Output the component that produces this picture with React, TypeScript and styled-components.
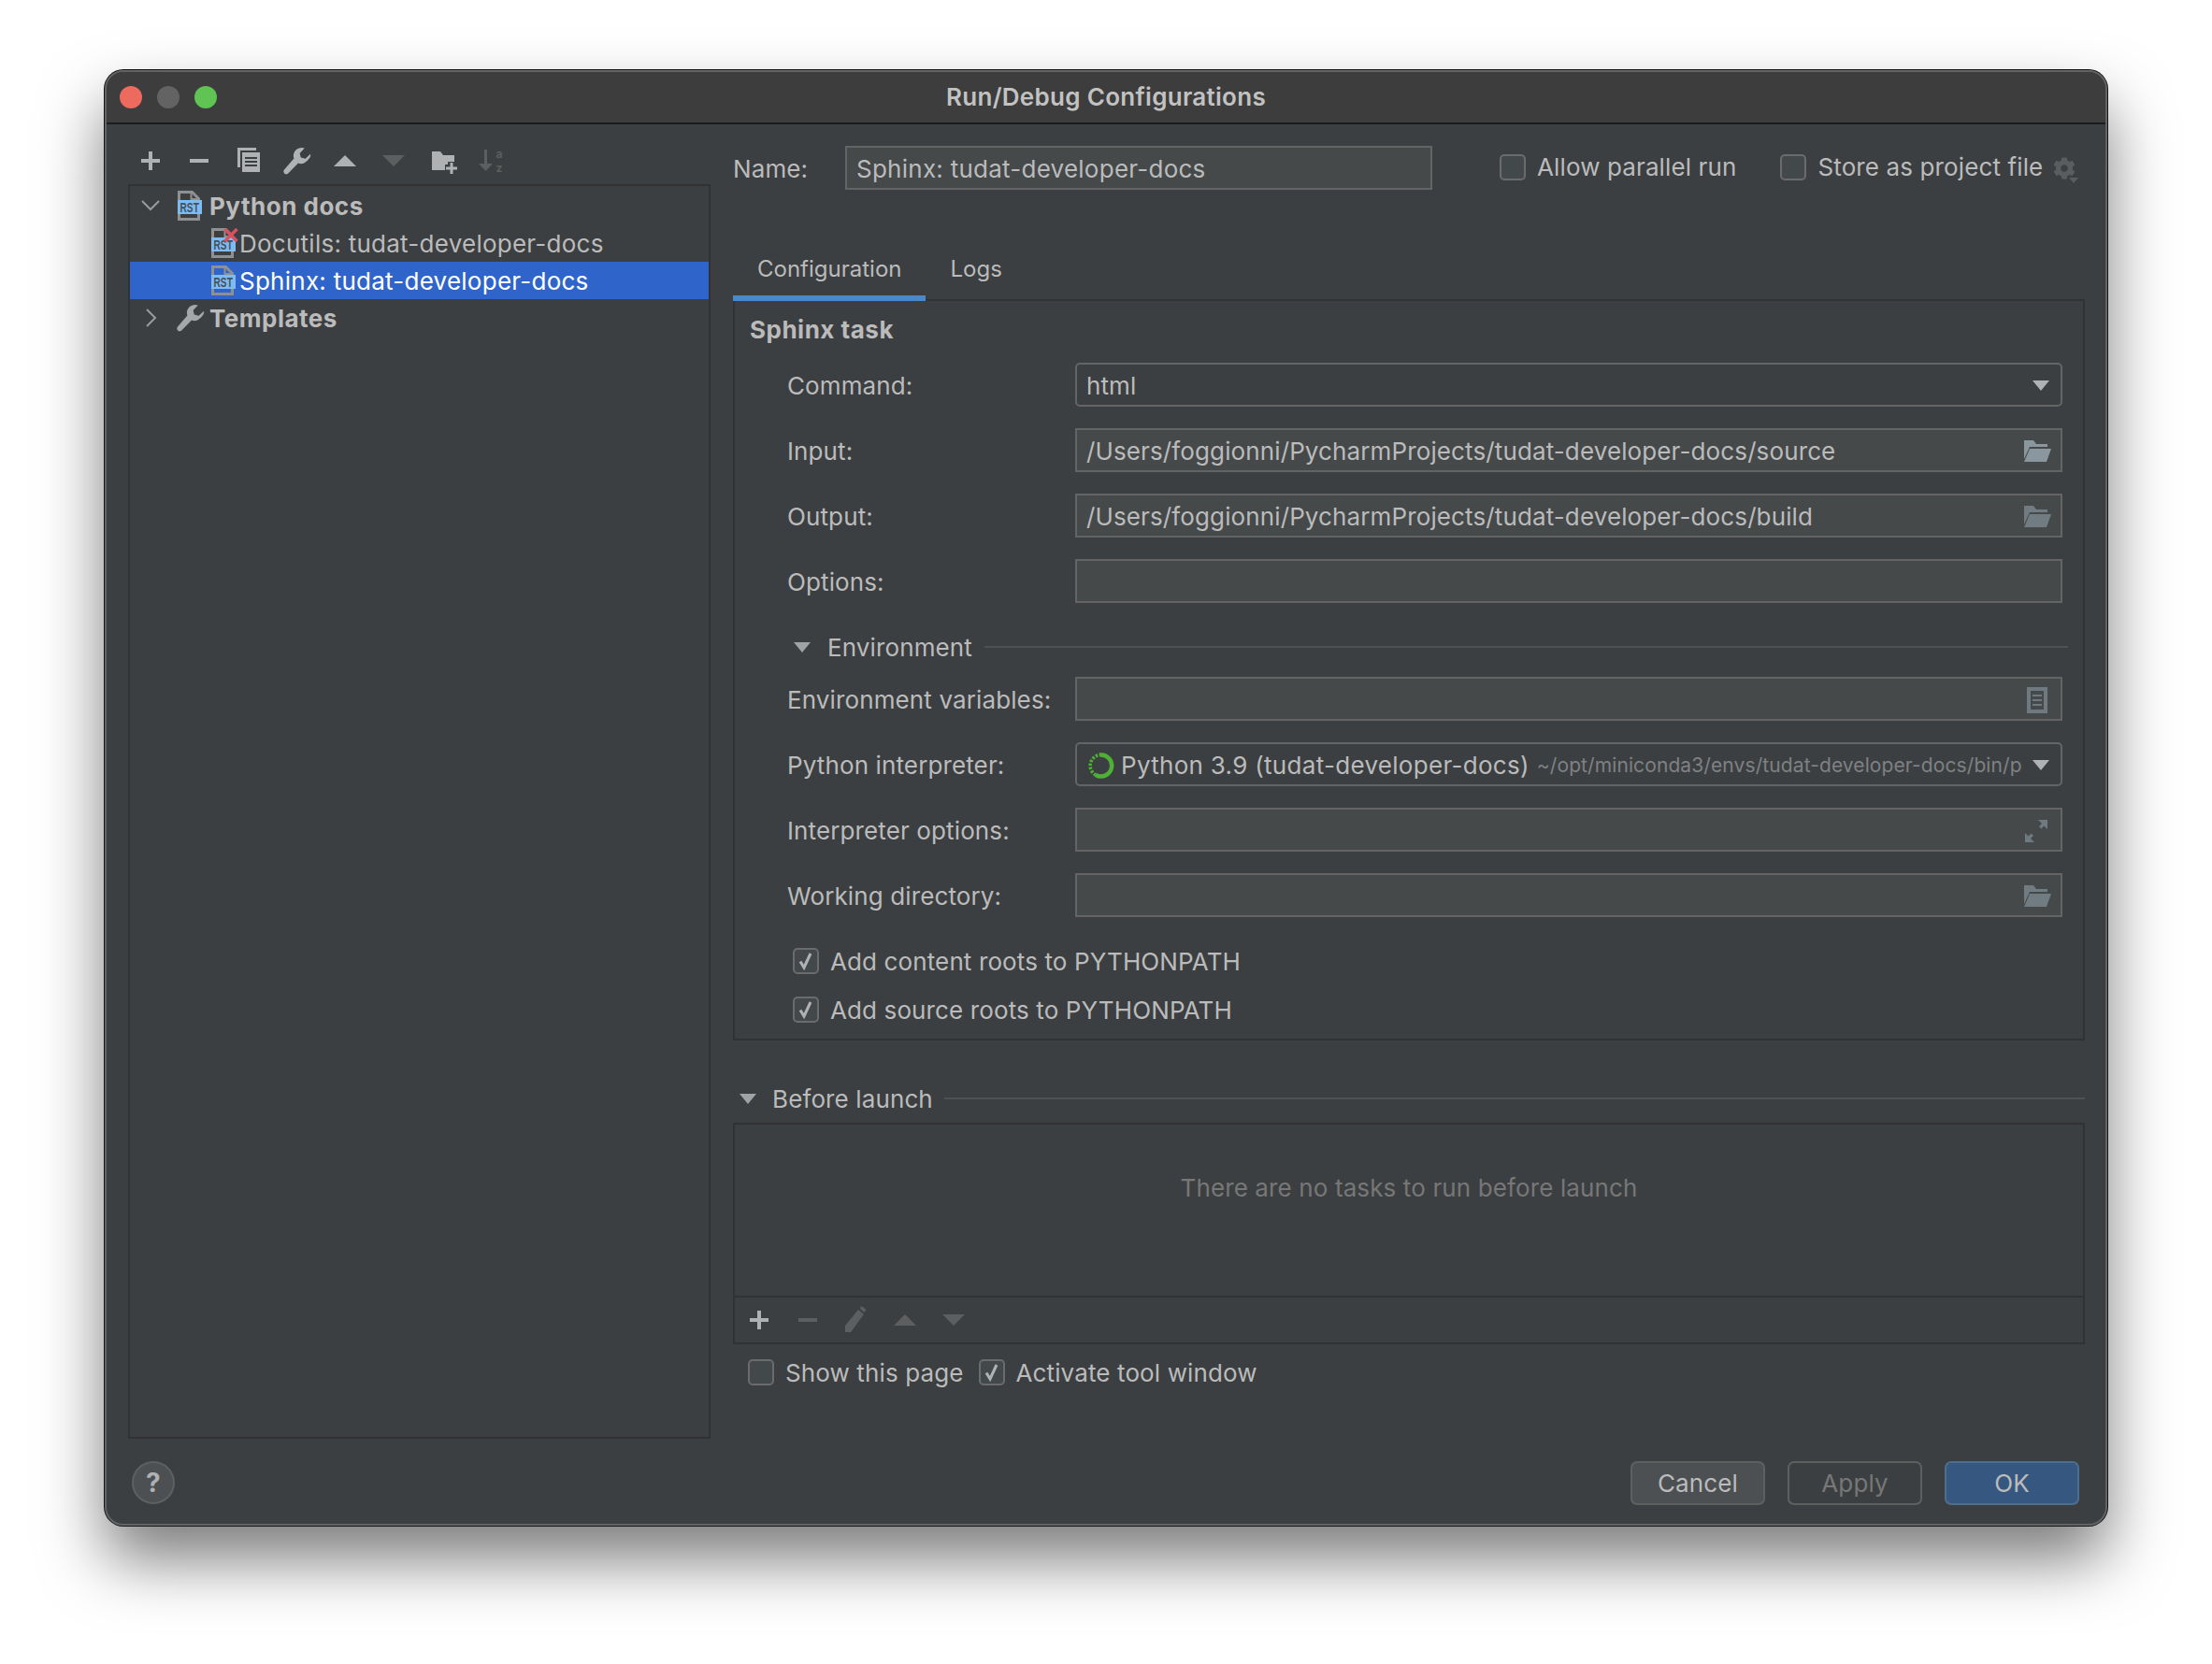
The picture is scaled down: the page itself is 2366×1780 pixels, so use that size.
import React from "react";
import styled, { createGlobalStyle } from "styled-components";
import { FaCog } from "react-icons/fa";

const ACTIVE = "#afb1b3";
const DISABLED = "#5c5e60";
const PANEL = "#3c3f41";

const GlobalStyle = createGlobalStyle`
  html, body {
    margin: 0;
    background: #fff;
  }
  * {
    box-sizing: border-box;
  }
`;

const Page = styled.div`
  width: 2366px;
  height: 1780px;
  padding: 75px 0 0 112px;
  overflow: hidden;
  background: #fff;
  font-family: Inter, "Noto Sans", sans-serif;
  font-size: 26px;
  letter-spacing: 0.12px;
  color: #bbb;
`;

const Window = styled.div`
  width: 2142px;
  height: 1557px;
  display: flex;
  flex-direction: column;
  background: ${PANEL};
  border: 2px solid #626466;
  border-radius: 20px;
  box-shadow: 0 0 0 1px #151515, 0 36px 68px rgba(0, 0, 0, 0.52);
`;

const TitleBar = styled.div`
  flex: none;
  height: 56px;
  display: grid;
  grid-template-columns: 1fr auto 1fr;
  align-items: center;
  padding: 0 14px;
  background: #3d3d3d;
  border-bottom: 2px solid #1c1c1c;
  border-radius: 18px 18px 0 0;
`;

const Lights = styled.div`
  display: flex;
  gap: 16px;
`;

const Light = styled.span<{ $color: string }>`
  width: 24px;
  height: 24px;
  border-radius: 50%;
  background: ${(p) => p.$color};
`;

const Title = styled.div`
  font-size: 26px;
  font-weight: 600;
  color: #c2c2c2;
  letter-spacing: 0.3px;
  padding-bottom: 1px;
`;

const Main = styled.div`
  flex: none;
  height: 1406px;
  display: flex;
  padding-left: 23px;
  gap: 24px;
`;

const Sidebar = styled.div`
  flex: none;
  width: 623px;
  display: flex;
  flex-direction: column;
`;

const Toolbar = styled.div<{ $left: number }>`
  display: flex;
  align-items: center;
  gap: 20px;
  padding-left: ${(p) => p.$left}px;
`;

const SideTools = styled(Toolbar)`
  margin-top: 23px;
  margin-bottom: 9px;
  height: 32px;
`;

const Tree = styled.div`
  flex: 1;
  padding-top: 1px;
  border: 2px solid #323232;
`;

const TreeRow = styled.div<{ $indent: number; $selected?: boolean; $gap: number }>`
  height: 40px;
  display: flex;
  align-items: center;
  gap: ${(p) => p.$gap}px;
  padding-left: ${(p) => p.$indent}px;
  background: ${(p) => (p.$selected ? "#2f65ca" : "transparent")};
  color: ${(p) => (p.$selected ? "#fff" : "#bbb")};
`;

const TreeLabel = styled.span<{ $bold?: boolean }>`
  font-weight: ${(p) => (p.$bold ? 700 : 400)};
  letter-spacing: ${(p) => (p.$bold ? "0.5px" : "0.25px")};
  white-space: nowrap;
  margin-left: ${(p) => (p.$bold ? "-5px" : "0")};
`;

const Right = styled.div`
  flex: none;
  width: 1446px;
  display: flex;
  flex-direction: column;
`;

const NameRow = styled.div`
  margin-top: 23px;
  height: 47px;
  display: flex;
  align-items: center;
`;

const NameLabel = styled.span`
  width: 120px;
  padding-top: 2px;
`;

const TextBox = styled.div`
  height: 47px;
  display: flex;
  align-items: center;
  justify-content: space-between;
  padding: 2px 10px 0;
  background: #45494a;
  border: 2px solid #646464;
  white-space: nowrap;
`;

const NameBox = styled(TextBox)`
  width: 628px;
  margin-right: 72px;
  letter-spacing: 0.25px;
`;

const CheckLine = styled.label<{ $gap?: number; $after?: number }>`
  display: flex;
  align-items: center;
  gap: ${(p) => p.$gap ?? 12}px;
  margin-right: ${(p) => p.$after ?? 0}px;
  white-space: nowrap;
`;

const HeadCheck = styled(CheckLine)`
  position: relative;
  top: -1px;
`;

const Box = styled.span`
  flex: none;
  width: 28px;
  height: 28px;
  display: flex;
  align-items: center;
  justify-content: center;
  background: #43494a;
  border: 2px solid #6b6b6b;
  border-radius: 5px;
`;

const GearWrap = styled.span`
  position: relative;
  display: flex;
  margin-left: 11px;
  color: #5a5c5e;
`;

const GearCaret = styled.span`
  position: absolute;
  right: -3px;
  bottom: -4px;
  border-left: 5px solid transparent;
  border-right: 5px solid transparent;
  border-top: 6px solid #5a5c5e;
`;

const TabBar = styled.div`
  margin-top: 59px;
  height: 60px;
  display: flex;
`;

const Tab = styled.div<{ $active?: boolean }>`
  position: relative;
  z-index: 1;
  display: flex;
  align-items: center;
  padding: 0 26px 4px;
  font-size: 24px;
  letter-spacing: 0;
  border-bottom: 6px solid ${(p) => (p.$active ? "#4a88c7" : "transparent")};
`;

const TabPanel = styled.div`
  margin-top: -2px;
  height: 793px;
  padding: 14px 22px 0 16px;
  border: 2px solid #323232;
`;

const Heading = styled.div`
  height: 34px;
  line-height: 34px;
  margin-bottom: 18px;
  font-weight: 700;
  letter-spacing: 0.5px;
`;

const FormRow = styled.div`
  height: 47px;
  margin-bottom: 23px;
  display: flex;
  align-items: center;
  padding-left: 40px;
`;

const FormLabel = styled.span`
  flex: none;
  width: 308px;
  padding-top: 2px;
  white-space: nowrap;
`;

const Field = styled(TextBox)`
  flex: 1;
  min-width: 0;
`;

const Combo = styled(Field)`
  background: ${PANEL};
  border-radius: 5px;
`;

const ComboMain = styled.span`
  display: flex;
  align-items: center;
  gap: 7px;
  padding-left: 2px;
  letter-spacing: 0.3px;
  white-space: nowrap;
`;

const ComboHint = styled.span`
  margin-left: 1px;
  font-size: 21px;
  letter-spacing: 0.1px;
  color: #7f8183;
`;

const Section = styled.div<{ $indent: number }>`
  height: 34px;
  display: flex;
  align-items: center;
  gap: 18px;
  padding-left: ${(p) => p.$indent}px;
`;

const EnvSection = styled(Section)`
  margin-top: 30px;
  margin-bottom: 15px;
  margin-right: -6px;
`;

const LaunchSection = styled(Section)`
  margin-top: 45px;
  margin-bottom: 9px;
  gap: 17px;
`;

const SectionLine = styled.span`
  flex: 1;
  height: 2px;
  margin-left: -5px;
  background: #505152;
`;

const CheckStack = styled.div`
  display: flex;
  flex-direction: column;
  gap: 18px;
  margin-top: 30px;
  padding-left: 46px;
`;

const Checked = styled(CheckLine)`
  height: 34px;
`;

const LaunchBox = styled.div`
  height: 237px;
  display: flex;
  flex-direction: column;
  border: 2px solid #323232;
`;

const EmptyNote = styled.div`
  height: 183px;
  padding-top: 51px;
  line-height: 34px;
  text-align: center;
  color: #777;
`;

const LaunchTools = styled(Toolbar)`
  flex: 1;
  border-top: 2px solid #323232;
`;

const PageOptions = styled.div`
  margin-top: 13px;
  height: 34px;
  display: flex;
  align-items: center;
  padding-left: 16px;
`;

const Footer = styled.div`
  flex: 1;
  display: flex;
  align-items: flex-start;
  justify-content: space-between;
  padding: 24px 28px 0 27px;
`;

const HelpButton = styled.div`
  width: 46px;
  height: 46px;
  display: flex;
  align-items: center;
  justify-content: center;
  border-radius: 50%;
  background: #4c5052;
  border: 2px solid #5e6060;
  font-size: 28px;
  font-weight: 700;
  color: #afb1b3;
`;

const Buttons = styled.div`
  display: flex;
  gap: 24px;
`;

const Button = styled.div<{ $kind: "plain" | "off" | "main" }>`
  width: 144px;
  height: 47px;
  display: flex;
  align-items: center;
  justify-content: center;
  border-radius: 7px;
  background: ${(p) =>
    p.$kind === "main" ? "#365880" : p.$kind === "plain" ? "#4c5052" : "transparent"};
  border: 2px solid ${(p) => (p.$kind === "main" ? "#4c708c" : "#5e6060")};
  color: ${(p) => (p.$kind === "off" ? "#777" : "#bbb")};
`;

const Svg = styled.svg<{ $inset?: number }>`
  flex: none;
  display: block;
  margin-right: ${(p) => p.$inset ?? 0}px;
`;

function Plus({ color = ACTIVE }: { color?: string }) {
  return (
    <Svg width="32" height="32" viewBox="0 0 32 32" fill={color}>
      <rect x="6" y="14" width="20" height="4" />
      <rect x="14" y="6" width="4" height="20" />
    </Svg>
  );
}

function Minus({ color = ACTIVE }: { color?: string }) {
  return (
    <Svg width="32" height="32" viewBox="0 0 32 32" fill={color}>
      <rect x="6" y="14" width="20" height="4" />
    </Svg>
  );
}

function Copy() {
  return (
    <Svg width="32" height="32" viewBox="-1 0 32 32" fill={ACTIVE}>
      <path d="M4 2h20v3H7v18H4z" />
      <rect x="9" y="7" width="19" height="21" />
      <rect x="12" y="12" width="13" height="2" fill={PANEL} />
      <rect x="12" y="16" width="13" height="2" fill={PANEL} />
      <rect x="12" y="20" width="13" height="2" fill={PANEL} />
    </Svg>
  );
}

const WRENCH =
  "M15 4.400l-2.700 2.500-2.400-.6-.6-2.300L11.900 1.300C10.200.7 8.400 1.100 7.200 2.300 6 3.500 5.600 5.300 6.200 6.800L1.100 12.600c-.6.6-.6 1.500 0 2.100.6.6 1.400.6 2 0L8.500 9.300c1.600.6 3.300.2 4.500-1 1.200-1.200 2.400-2.400 2-3.900z";

function Wrench({ color = ACTIVE }: { color?: string }) {
  return (
    <Svg width="32" height="32" viewBox="-0.5 0 16 16" fill={color}>
      <path d={WRENCH} />
    </Svg>
  );
}

function Up({ color = ACTIVE }: { color?: string }) {
  return (
    <Svg width="32" height="32" viewBox="0 0 32 32" fill={color}>
      <path d="M16 10l12 12H4z" />
    </Svg>
  );
}

function Down({ color = ACTIVE }: { color?: string }) {
  return (
    <Svg width="32" height="32" viewBox="0 0 32 32" fill={color}>
      <path d="M16 22L4 10h24z" />
    </Svg>
  );
}

function FolderAdd() {
  return (
    <Svg width="32" height="32" viewBox="-2 0 32 32" fill={ACTIVE}>
      <path d="M3 6h9l3 4h12v7h-7v3h-3v6H3z" />
      <rect x="18" y="22.500" width="12" height="3" />
      <rect x="22.500" y="18" width="3" height="12" />
    </Svg>
  );
}

function Sort() {
  return (
    <Svg width="32" height="32" viewBox="0 0 32 32" fill={DISABLED}>
      <path d="M9 4h3v15h6l-7.500 8L3 19h6z" />
      <text fontSize="12" fontWeight="700" textAnchor="middle" fontFamily="Inter, sans-serif">
        <tspan x="25" y="12.500">a</tspan>
        <tspan x="25" y="27.500">z</tspan>
      </text>
    </Svg>
  );
}

function Pencil() {
  return (
    <Svg width="32" height="32" viewBox="0 0 32 32" fill={DISABLED}>
      <path d="M4 29v-7L18 5l6 5L10 29z" />
      <path d="M19.500 3.500l2-2.500 5 4-2 3z" />
    </Svg>
  );
}

function Chevron({ open }: { open: boolean }) {
  return (
    <Svg width="32" height="32" viewBox="0 0 32 32" fill="none" stroke="#9a9b9c" strokeWidth="2">
      <path d={open ? "M7 11l9 9 9-9" : "M12 7l9 9-9 9"} />
    </Svg>
  );
}

function RstIcon({ failed }: { failed?: boolean }) {
  return (
    <Svg width="32" height="32" viewBox="-2.500 0 32 32">
      <path d="M2 1.500h14l7 7v22H2z" fill="none" stroke="#8f9091" strokeWidth="3" />
      <path d="M15 1v8h8" fill="none" stroke="#8f9091" strokeWidth="2" />
      <rect x="0.500" y="10" width="26" height="15" fill="#7dbcf2" />
      <text
        transform="translate(3 22.500) scale(0.72 1)"
        fontSize="14"
        fontWeight="700"
        fill="#47505a"
        fontFamily="'Liberation Sans', sans-serif"
      >
        RST
      </text>
      {failed && <path d="M15 1l13 13M28 1L15 14" stroke="#d9505f" strokeWidth="3.500" fill="none" />}
    </Svg>
  );
}

function Folder({ dim }: { dim?: boolean }) {
  const back = dim ? "#717c82" : "#8b979e";
  return (
    <Svg width="30" height="23" viewBox="0 0 30 23">
      <path d="M1 0h10l3 4h12v3H7L1 20z" fill={back} />
      <path d="M7 9h23l-5 14H1z" fill={back} />
    </Svg>
  );
}

function Caret({ inset = 2 }: { inset?: number }) {
  return (
    <Svg $inset={inset} width="18" height="11" viewBox="0 0 18 11" fill={ACTIVE}>
      <path d="M0 0h18L9 11z" />
    </Svg>
  );
}

function ListIcon() {
  return (
    <Svg $inset={4} width="22" height="28" viewBox="0 0 22 28" fill="#6e7a80">
      <path d="M0 0h22v28H0zM4 4v20h14V4z" fillRule="evenodd" />
      <rect x="6" y="8" width="10" height="2" />
      <rect x="6" y="13" width="10" height="2" />
      <rect x="6" y="18" width="10" height="2" />
    </Svg>
  );
}

function Expand() {
  return (
    <Svg $inset={4} width="24" height="24" viewBox="0 0 24 24" fill="#6e7a80">
      <path d="M14 0h10v10l-3.600-3.600-3 3L15 7l3-3z" />
      <path d="M10 24H0V14l3.600 3.600 3-3L9 17l-3 3z" />
    </Svg>
  );
}

function CondaRing() {
  return (
    <Svg width="28" height="28" viewBox="0 0 28 28" fill="none" stroke="#4fb036">
      <path d="M12 2.600A11.500 11.500 0 1 1 8 24" strokeWidth="4.500" />
      <path d="M8 24A11.500 11.500 0 0 1 12 2.600" strokeWidth="3.500" strokeDasharray="2.500 1.500" />
    </Svg>
  );
}

function Tick() {
  return (
    <Svg width="24" height="24" viewBox="0 0 24 24" fill="none" stroke="#b0b2b4" strokeWidth="3">
      <path d="M6 12.500l4 6.500 7-15" />
    </Svg>
  );
}

function Check({ on, label, gap, after }: { on?: boolean; label: string; gap?: number; after?: number }) {
  return (
    <CheckLine $gap={gap} $after={after}>
      <Box>{on && <Tick />}</Box>
      {label}
    </CheckLine>
  );
}

function Triangle() {
  return (
    <Svg width="18" height="11" viewBox="0 0 18 11" fill="#a0a2a4">
      <path d="M0 0h18L9 11z" />
    </Svg>
  );
}

export default function App() {
  return (
    <Page>
      <GlobalStyle />
      <Window>
        <TitleBar>
          <Lights>
            <Light $color="#ed6a5e" />
            <Light $color="#636363" />
            <Light $color="#5fc454" />
          </Lights>
          <Title>Run/Debug Configurations</Title>
        </TitleBar>

        <Main>
          <Sidebar>
            <SideTools $left={8}>
              <Plus />
              <Minus />
              <Copy />
              <Wrench />
              <Up />
              <Down color={DISABLED} />
              <FolderAdd />
              <Sort />
            </SideTools>
            <Tree>
              <TreeRow $indent={6} $gap={10}>
                <Chevron open />
                <RstIcon />
                <TreeLabel $bold>Python docs</TreeLabel>
              </TreeRow>
              <TreeRow $indent={84} $gap={1}>
                <RstIcon failed />
                <TreeLabel>Docutils: tudat-developer-docs</TreeLabel>
              </TreeRow>
              <TreeRow $indent={84} $gap={1} $selected>
                <RstIcon />
                <TreeLabel>Sphinx: tudat-developer-docs</TreeLabel>
              </TreeRow>
              <TreeRow $indent={6} $gap={10}>
                <Chevron open={false} />
                <Wrench color="#a6a7a8" />
                <TreeLabel $bold>Templates</TreeLabel>
              </TreeRow>
            </Tree>
          </Sidebar>

          <Right>
            <NameRow>
              <NameLabel>Name:</NameLabel>
              <NameBox>Sphinx: tudat-developer-docs</NameBox>
              <HeadCheck $after={47}>
                <Box />
                Allow parallel run
              </HeadCheck>
              <HeadCheck>
                <Box />
                Store as project file
              </HeadCheck>
              <GearWrap>
                <FaCog size={24} />
                <GearCaret />
              </GearWrap>
            </NameRow>

            <TabBar>
              <Tab $active>Configuration</Tab>
              <Tab>Logs</Tab>
            </TabBar>
            <TabPanel>
              <Heading>Sphinx task</Heading>
              <FormRow>
                <FormLabel>Command:</FormLabel>
                <Combo>
                  html
                  <Caret />
                </Combo>
              </FormRow>
              <FormRow>
                <FormLabel>Input:</FormLabel>
                <Field>
                  /Users/foggionni/PycharmProjects/tudat-developer-docs/source
                  <Folder />
                </Field>
              </FormRow>
              <FormRow>
                <FormLabel>Output:</FormLabel>
                <Field>
                  /Users/foggionni/PycharmProjects/tudat-developer-docs/build
                  <Folder dim />
                </Field>
              </FormRow>
              <FormRow>
                <FormLabel>Options:</FormLabel>
                <Field />
              </FormRow>
              <EnvSection $indent={47}>
                <Triangle />
                Environment
                <SectionLine />
              </EnvSection>
              <FormRow>
                <FormLabel>Environment variables:</FormLabel>
                <Field>
                  <span />
                  <ListIcon />
                </Field>
              </FormRow>
              <FormRow>
                <FormLabel>Python interpreter:</FormLabel>
                <Combo>
                  <ComboMain>
                    <CondaRing />
                    Python 3.9 (tudat-developer-docs)
                    <ComboHint>~/opt/miniconda3/envs/tudat-developer-docs/bin/p</ComboHint>
                  </ComboMain>
                  <Caret />
                </Combo>
              </FormRow>
              <FormRow>
                <FormLabel>Interpreter options:</FormLabel>
                <Field>
                  <span />
                  <Expand />
                </Field>
              </FormRow>
              <FormRow>
                <FormLabel>Working directory:</FormLabel>
                <Field>
                  <span />
                  <Folder dim />
                </Field>
              </FormRow>
              <CheckStack>
                <Checked>
                  <Box>
                    <Tick />
                  </Box>
                  Add content roots to PYTHONPATH
                </Checked>
                <Checked>
                  <Box>
                    <Tick />
                  </Box>
                  Add source roots to PYTHONPATH
                </Checked>
              </CheckStack>
            </TabPanel>

            <LaunchSection $indent={7}>
              <Triangle />
              Before launch
              <SectionLine />
            </LaunchSection>
            <LaunchBox>
              <EmptyNote>There are no tasks to run before launch</EmptyNote>
              <LaunchTools $left={10}>
                <Plus />
                <Minus color={DISABLED} />
                <Pencil />
                <Up color={DISABLED} />
                <Down color={DISABLED} />
              </LaunchTools>
            </LaunchBox>
            <PageOptions>
              <Check label="Show this page" gap={12} after={16} />
              <Check on label="Activate tool window" />
            </PageOptions>
          </Right>
        </Main>

        <Footer>
          <HelpButton>?</HelpButton>
          <Buttons>
            <Button $kind="plain">Cancel</Button>
            <Button $kind="off">Apply</Button>
            <Button $kind="main">OK</Button>
          </Buttons>
        </Footer>
      </Window>
    </Page>
  );
}
